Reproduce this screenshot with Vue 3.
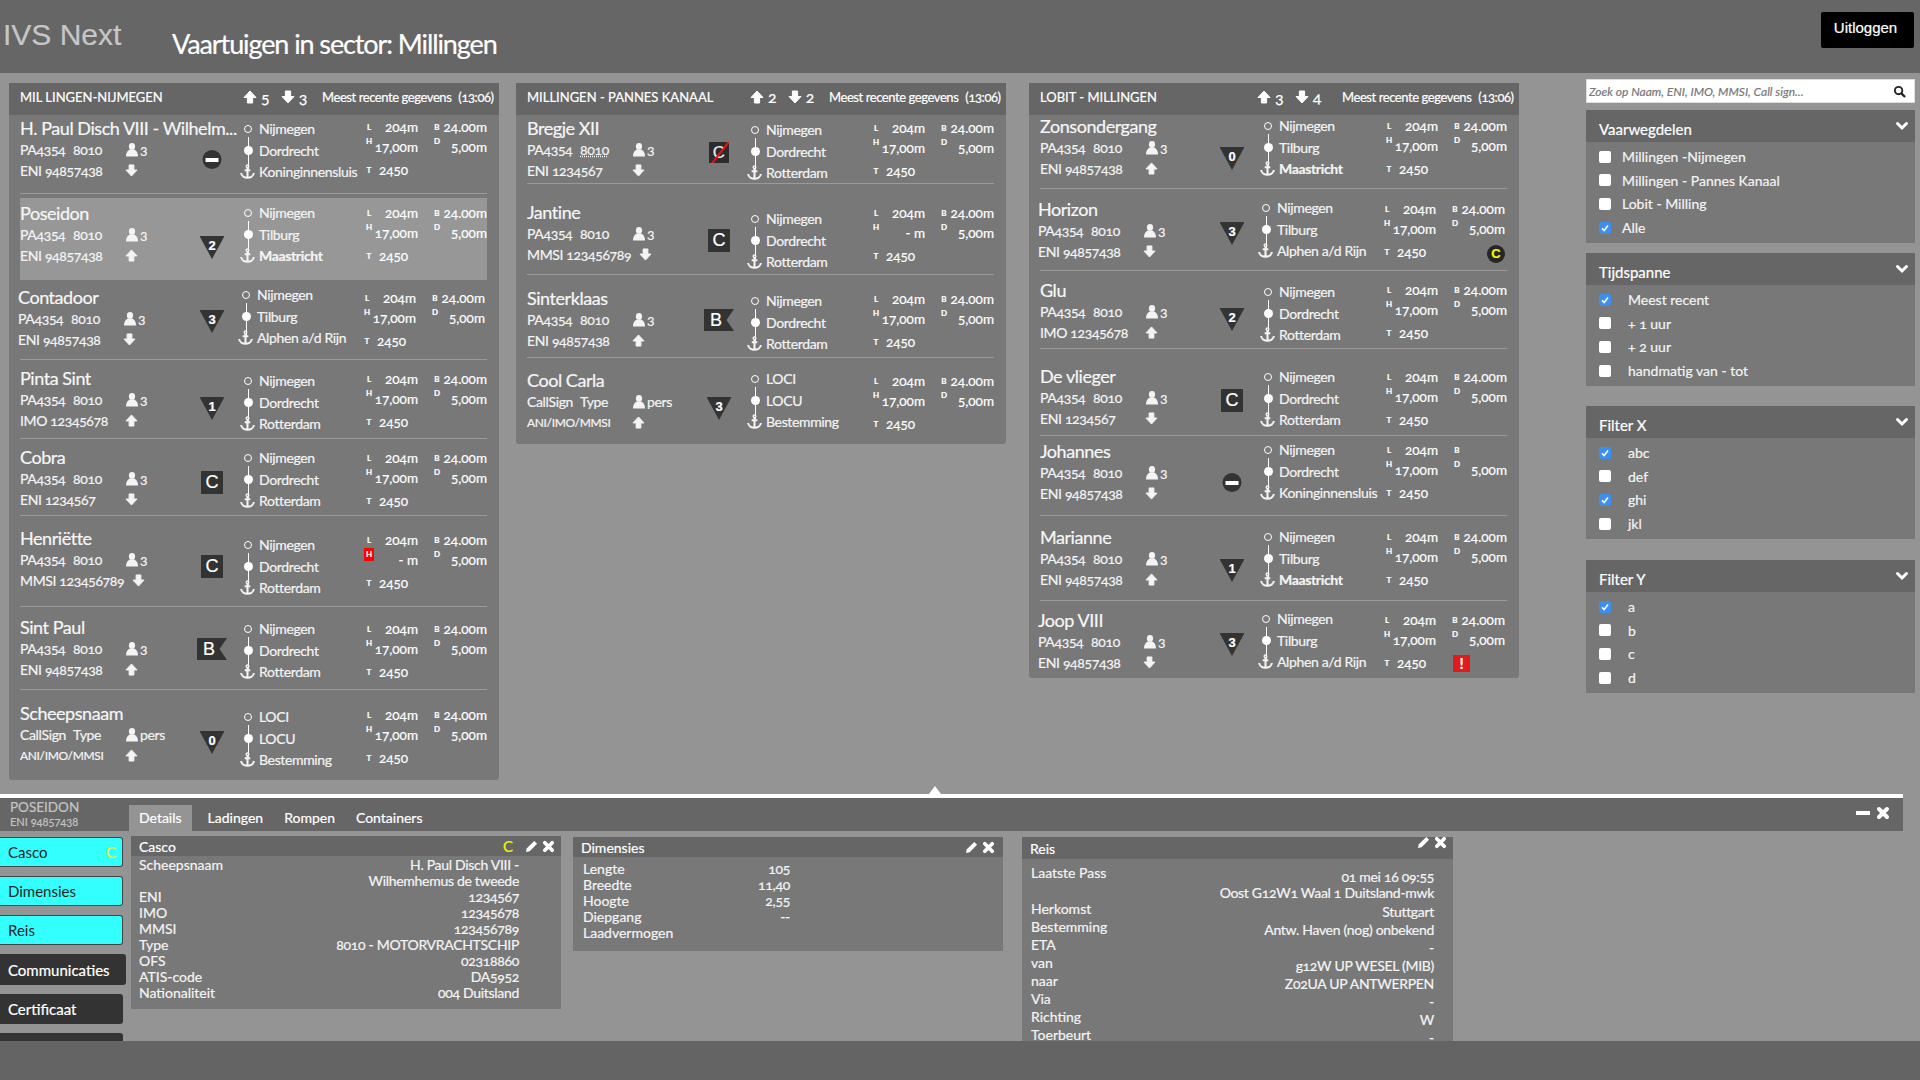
<template>
  <div class="page">
    <svg class="defs" width="0" height="0">
      <symbol id="i-up" viewBox="0 0 14 14"><path d="M7 1 13 7.5H9.6V13H4.4V7.5H1Z" fill="currentColor" stroke="currentColor" stroke-linejoin="round"/></symbol>
      <symbol id="i-down" viewBox="0 0 14 14"><path d="M7 13 13 6.5H9.6V1H4.4V6.5H1Z" fill="currentColor" stroke="currentColor" stroke-linejoin="round"/></symbol>
      <symbol id="i-person" viewBox="0 0 14 14"><ellipse cx="7" cy="3.4" rx="3.1" ry="3.4" fill="currentColor"/><path d="M1 13.4C1 11 1.6 8.6 4.6 6.6H9.4C12.4 8.6 13 11 13 13.4Z" fill="currentColor"/></symbol>
      <symbol id="i-anchor" viewBox="0 0 16 16"><g fill="none" stroke="currentColor" stroke-width="2.2"><circle cx="8" cy="2.4" r="1.4" stroke-width="1.5"/><path d="M8 4V14.5M5 6.6H11M1.2 9.6C1.6 13 5 14.6 8 14.6S14.4 13 14.8 9.6"/></g></symbol>
      <symbol id="i-pencil" viewBox="0 0 14 14"><path d="M10 1 13 4 5 12 1 13 2 9Z" fill="currentColor"/></symbol>
      <symbol id="i-close" viewBox="0 0 14 14"><path d="M3 3 11 11M11 3 3 11" stroke="currentColor" stroke-width="4" stroke-linecap="round" fill="none"/></symbol>
      <symbol id="i-chevron" viewBox="0 0 14 10"><path d="M2.5 2.5 7 7 11.5 2.5" stroke="currentColor" stroke-width="3" stroke-linecap="round" fill="none"/></symbol>
    </svg>

    <header class="top">
      <div class="brand">IVS Next</div>
      <h1 class="title">Vaartuigen in sector: Millingen</h1>
      <button class="logout">Uitloggen</button>
    </header>

    <main class="board">
      <section v-for="panel in panels" :key="panel.title" class="panel">
        <div class="panel-head">
          <span class="panel-title">{{ panel.title }}</span>
          <span class="counts" :style="{ marginRight: panel.shift + 'px' }">
            <svg class="ic-head"><use href="#i-up" /></svg><b>{{ panel.up }}</b>
            <svg class="ic-head down"><use href="#i-down" /></svg><b>{{ panel.down }}</b>
          </span>
          <span class="meta">Meest recente gegevens <i>(13:06)</i></span>
        </div>
        <div class="panel-body">
          <article
            v-for="ship in panel.ships"
            :key="ship.name"
            class="row"
            :class="{ active: ship.active, last: ship.last }"
            :style="{ height: ship.h + 'px', marginTop: (ship.mt || 0) + 'px' }"
          >
            <div class="ship" :style="{ paddingTop: ship.n - 12 + 'px', marginLeft: (ship.nx || 0) + 'px' }">
              <div class="name">{{ ship.name }}</div>
              <div class="info">
                <span class="pa">{{ ship.pa }}</span>
                <span class="type" :class="{ dotted: ship.dotted }">{{ ship.type }}</span>
                <svg class="ic-person"><use href="#i-person" /></svg>
                <span>{{ ship.count }}</span>
              </div>
              <div class="info">
                <span class="ident" :class="{ small: ship.small }">{{ ship.id }}</span>
                <svg class="ic-dir"><use :href="ship.dir === 'up' ? '#i-up' : '#i-down'" /></svg>
              </div>
            </div>

            <div v-if="ship.flag" class="flag" :class="flagClass(ship.flag)" :style="{ top: ship.fy + 'px' }">
              <span>{{ flagText(ship.flag) }}</span>
              <i v-if="ship.flag === 'Cx'" class="slash"></i>
            </div>

            <div class="route" :style="{ paddingTop: ship.r - 11 + 'px' }">
              <div class="stop"><span class="stop-ic"><i class="ring"></i></span>{{ ship.route[0] }}</div>
              <div class="stop"><span class="stop-ic"><i class="dot"></i></span>{{ ship.route[1] }}</div>
              <div class="stop" :class="{ strong: ship.route[2] === 'Maastricht' }">
                <span class="stop-ic"><svg class="ic-anchor"><use href="#i-anchor" /></svg></span>{{ ship.route[2] }}
              </div>
            </div>

            <div class="dims" :style="{ paddingTop: ship.d - 9 + 'px' }">
              <span class="tag">L</span><span class="val">204m</span>
              <span class="tag">B</span><span class="val">{{ ship.noB ? '' : '24.00m' }}</span>
              <span class="tag up" :class="{ warn: ship.warnH }">H</span><span class="val">{{ ship.noH ? '- m' : '17,00m' }}</span>
              <span class="tag up">D</span><span class="val">5,00m</span>
              <span class="tag">T</span><span class="val left">2450</span>
              <span v-if="ship.alert" class="alert">!</span>
              <span v-else-if="ship.yellow" class="yellow">C</span>
            </div>
          </article>
        </div>
      </section>

      <aside class="side">
        <div class="search">
          <input type="text" placeholder="Zoek op Naam, ENI, IMO, MMSI, Call sign..." />
          <svg viewBox="0 0 14 14" class="ic-search"><circle cx="6" cy="6" r="4" fill="none" stroke="#222" stroke-width="2" /><path d="M9 9 13 13" stroke="#222" stroke-width="2.4" /></svg>
        </div>
        <div v-for="group in filters" :key="group.title" class="filter" :style="{ marginBottom: group.gap + 'px' }">
          <div class="filter-head">
            <span>{{ group.title }}</span>
            <svg class="ic-chevron"><use href="#i-chevron" /></svg>
          </div>
          <div class="filter-body">
            <label v-for="item in group.items" :key="item.label" class="check">
              <span class="box" :class="{ on: item.on }">
                <svg v-if="item.on" viewBox="0 0 12 12"><path d="M3 6.4 5.2 8.6 9 3.6" fill="none" stroke="#fff" stroke-width="1.6" /></svg>
              </span>
              <span class="check-text" :style="{ marginLeft: group.indent + 'px' }">{{ item.label }}</span>
            </label>
          </div>
        </div>
      </aside>
    </main>

    <section class="detail">
      <i class="notch"></i>
      <div class="detail-head">
        <div class="who">
          <div class="who-name">POSEIDON</div>
          <div class="who-id">ENI 94857438</div>
        </div>
        <nav class="tabs">
          <a v-for="(tab, i) in tabs" :key="tab" class="tab" :class="{ current: i === 0 }">{{ tab }}</a>
        </nav>
        <div class="win-actions">
          <i class="min"></i>
          <svg class="ic-win"><use href="#i-close" /></svg>
        </div>
      </div>

      <div class="detail-main">
        <nav class="side-nav">
          <a v-for="item in sections" :key="item.label" class="nav-btn" :class="[item.kind]">
            {{ item.label }}<em v-if="item.mark">C</em>
          </a>
        </nav>

        <div class="card casco">
          <div class="card-head">
            <span>Casco</span>
            <span class="card-tools"><b class="mark">C</b><svg><use href="#i-pencil" /></svg><svg><use href="#i-close" /></svg></span>
          </div>
          <dl class="facts">
            <template v-for="f in casco" :key="f[0]">
              <dt>{{ f[0] }}</dt>
              <dd>{{ f[1] }}<template v-if="f[2]"><br />{{ f[2] }}</template></dd>
            </template>
          </dl>
        </div>

        <div class="card dimensions">
          <div class="card-head">
            <span>Dimensies</span>
            <span class="card-tools"><svg><use href="#i-pencil" /></svg><svg><use href="#i-close" /></svg></span>
          </div>
          <dl class="facts">
            <template v-for="f in dimensions" :key="f[0]">
              <dt>{{ f[0] }}</dt>
              <dd>{{ f[1] }}</dd>
            </template>
          </dl>
        </div>

        <div class="card trip">
          <div class="card-head">
            <span>Reis</span>
            <span class="card-tools high"><svg><use href="#i-pencil" /></svg><svg><use href="#i-close" /></svg></span>
          </div>
          <dl class="facts">
            <template v-for="f in trip" :key="f[0]">
              <dt>{{ f[0] }}</dt>
              <dd>{{ f[1] }}<template v-if="f[2]"><br />{{ f[2] }}</template></dd>
            </template>
          </dl>
        </div>
      </div>
    </section>

    <footer class="bottom"></footer>
  </div>
</template>

<script setup>
const NMG = 'Nijmegen'
const DOR = 'Dordrecht'
const TIL = 'Tilburg'
const ROT = 'Rotterdam'

// h = rijhoogte, n/r/d = middenlijn van naam, route en maten, fy = top van de vlag
const ship = (name, id, dir, flag, route, pos, extra = {}) => ({
  name, id, dir, flag, route,
  pa: 'PA4354', type: '8010', count: '3',
  h: pos[0], n: pos[1], r: pos[2], d: pos[3], fy: pos[4],
  ...extra,
})

const callsign = { pa: 'CallSign', type: 'Type', count: 'pers', small: true }

const panels = [
  {
    title: 'MIL LINGEN-NIJMEGEN', up: 5, down: 3, shift: 0,
    ships: [
      ship('H. Paul Disch VIII - Wilhelm...', 'ENI 94857438', 'down', 'min', [NMG, DOR, 'Koninginnensluis'], [79, 14, 14, 12, 35]),
      ship('Poseidon', 'ENI 94857438', 'up', '2', [NMG, TIL, 'Maastricht'], [82, 16, 15, 15, 38], { active: true, mt: 4 }),
      ship('Contadoor', 'ENI 94857438', 'down', '3', [NMG, TIL, 'Alphen a/d Rijn'], [80, 18, 15, 18, 30], { nx: -2 }),
      ship('Pinta Sint', 'IMO 12345678', 'up', '1', [NMG, DOR, ROT], [79, 19, 21, 19, 37]),
      ship('Cobra', 'ENI 1234567', 'down', 'C', [NMG, DOR, ROT], [77, 19, 19, 19, 32]),
      ship('Henriëtte', 'MMSI 123456789', 'down', 'C', [NMG, DOR, ROT], [91, 23, 29, 24, 39], { noH: true, warnH: true }),
      ship('Sint Paul', 'ENI 94857438', 'up', 'B', [NMG, DOR, ROT], [83, 21, 22, 22, 31]),
      ship('Scheepsnaam', 'ANI/IMO/MMSI', 'up', '0', ['LOCI', 'LOCU', 'Bestemming'], [90, 24, 27, 25, 41], { ...callsign, last: true }),
    ],
  },
  {
    title: 'MILLINGEN - PANNES KANAAL', up: 2, down: 2, shift: 0,
    ships: [
      ship('Bregje XII', 'ENI 1234567', 'down', 'Cx', [NMG, DOR, ROT], [69, 14, 15, 13, 27], { dotted: true }),
      ship('Jantine', 'MMSI 123456789', 'down', 'C', [NMG, DOR, ROT], [91, 29, 35, 29, 45], { noH: true }),
      ship('Sinterklaas', 'ENI 94857438', 'up', 'B', [NMG, DOR, ROT], [83, 24, 26, 24, 34]),
      ship('Cool Carla', 'ANI/IMO/MMSI', 'up', '3', ['LOCI', 'LOCU', 'Bestemming'], [86, 23, 21, 23, 39], { ...callsign, last: true }),
    ],
  },
  {
    title: 'LOBIT - MILLINGEN', up: 3, down: 4, shift: 6,
    ships: [
      ship('Zonsondergang', 'ENI 94857438', 'up', '0', [NMG, TIL, 'Maastricht'], [74, 11, 10, 11, 32]),
      ship('Horizon', 'ENI 94857438', 'down', '3', [NMG, TIL, 'Alphen a/d Rijn'], [82, 21, 19, 20, 33], { yellow: true, nx: -2 }),
      ship('Glu', 'IMO 12345678', 'up', '2', [NMG, DOR, ROT], [78, 20, 21, 19, 37]),
      ship('De vlieger', 'ENI 1234567', 'down', 'C', [NMG, DOR, ROT], [87, 28, 28, 28, 40]),
      ship('Johannes', 'ENI 94857438', 'down', 'min', [NMG, DOR, 'Koninginnensluis'], [80, 16, 14, 14, 37], { noB: true }),
      ship('Marianne', 'ENI 94857438', 'up', '1', [NMG, TIL, 'Maastricht'], [85, 22, 21, 21, 43]),
      ship('Joop VIII', 'ENI 94857438', 'down', '3', [NMG, TIL, 'Alphen a/d Rijn'], [77, 20, 18, 19, 32], { alert: true, last: true, nx: -2 }),
    ],
  },
]

const flagClass = (f) => {
  if (f === 'min') return 'f-min'
  if (f === 'C' || f === 'Cx') return f === 'C' ? 'f-c' : 'f-c crossed'
  if (f === 'B') return 'f-b'
  return 'f-tri'
}
const flagText = (f) => (f === 'min' ? '' : f === 'Cx' ? 'C' : f)

const boxes = (labels, on = []) => labels.map((label) => ({ label, on: on.includes(label) }))
const filters = [
  { title: 'Vaarwegdelen', indent: 11, gap: 10, items: boxes(['Millingen -Nijmegen', 'Millingen - Pannes Kanaal', 'Lobit - Milling', 'Alle'], ['Alle']) },
  { title: 'Tijdspanne', indent: 17, gap: 20, items: boxes(['Meest recent', '+ 1 uur', '+ 2 uur', 'handmatig van - tot'], ['Meest recent']) },
  { title: 'Filter X', indent: 17, gap: 21, items: boxes(['abc', 'def', 'ghi', 'jkl'], ['abc', 'ghi']) },
  { title: 'Filter Y', indent: 17, gap: 0, items: boxes(['a', 'b', 'c', 'd'], ['a']) },
]

const tabs = ['Details', 'Ladingen', 'Rompen', 'Containers']
const sections = [
  { label: 'Casco', kind: 'cyan', mark: true },
  { label: 'Dimensies', kind: 'cyan' },
  { label: 'Reis', kind: 'cyan' },
  { label: 'Communicaties', kind: 'dark wide' },
  { label: 'Certificaat', kind: 'dark' },
  { label: '', kind: 'dark' },
]

const casco = [
  ['Scheepsnaam', 'H. Paul Disch VIII -', 'Wilhemhemus de tweede'],
  ['ENI', '1234567'],
  ['IMO', '12345678'],
  ['MMSI', '123456789'],
  ['Type', '8010 - MOTORVRACHTSCHIP'],
  ['OFS', '02318860'],
  ['ATIS-code', 'DA5952'],
  ['Nationaliteit', '004 Duitsland'],
]
const dimensions = [
  ['Lengte', '105'],
  ['Breedte', '11,40'],
  ['Hoogte', '2,55'],
  ['Diepgang', '--'],
  ['Laadvermogen', ''],
]
const trip = [
  ['Laatste Pass', '01 mei 16 09:55', 'Oost G12W1 Waal 1 Duitsland-mwk'],
  ['Herkomst', 'Stuttgart'],
  ['Bestemming', 'Antw. Haven (nog) onbekend'],
  ['ETA', '-'],
  ['van', 'g12W UP WESEL (MIB)'],
  ['naar', 'Z02UA UP ANTWERPEN'],
  ['Via', '-'],
  ['Richting', 'W'],
  ['Toerbeurt', '-'],
]
</script>

<style>
html, body { margin: 0; background: #949494; }
</style>

<style scoped>
.page {
  width: 1920px;
  height: 1080px;
  overflow: hidden;
  display: flex;
  flex-direction: column;
  background: #949494;
  color: #f4f4f4;
  font-family: Lato, "Noto Sans", sans-serif;
  font-size: 14px;
  font-variant-numeric: oldstyle-nums;
  -webkit-text-stroke: 0.2px currentColor;
}
.defs { position: absolute; }
svg { display: block; }

.top {
  flex: 0 0 73px;
  display: flex;
  align-items: flex-start;
  background: #666;
}
.brand {
  width: 172px;
  padding: 18px 0 0 3px;
  box-sizing: border-box;
  font-family: "Liberation Sans", sans-serif;
  font-size: 30px;
  color: #c6c6c6;
}
.title {
  margin: 27px 0 0;
  font-size: 27px;
  font-weight: 400;
  letter-spacing: -1.1px;
  color: #fff;
}
.logout {
  margin: 12px 6px 0 auto;
  width: 93px;
  height: 36px;
  border: 0;
  border-radius: 2px;
  background: #000;
  color: #fff;
  font-family: "Liberation Sans", sans-serif;
  font-size: 15px;
  padding: 0 4px 6px 0;
}

.board {
  flex: 0 0 721px;
  display: flex;
  align-items: flex-start;
  padding: 10px 0 0 9px;
  box-sizing: border-box;
}
.panel {
  width: 490px;
  background: #787878;
  border-radius: 0 0 3px 3px;
}
.panel:nth-child(2) { margin-left: 17px; }
.panel:nth-child(3) { margin-left: 23px; }
.panel-head {
  height: 32px;
  display: flex;
  align-items: center;
  padding: 0 5px 5px 11px;
  box-sizing: border-box;
  background: #666;
  font-size: 13px;
  color: #fff;
}
.panel-title { flex: 1; white-space: nowrap; }
.counts {
  display: flex;
  align-items: center;
  width: 79px;
  font-size: 16px;
}
.counts b { font-weight: 400; margin-left: 4px; }
.ic-head { width: 14px; height: 14px; }
.ic-head.down { margin-left: 11px; }
.meta { white-space: nowrap; width: 172px; text-align: left; font-size: 13px; letter-spacing: -0.42px; }
.meta i { font-style: normal; margin-left: 4px; }
.panel-body { padding: 0 12px 0 11px; }

.row {
  position: relative;
  display: flex;
  box-sizing: border-box;
  border-bottom: 1px solid #9a9a9a;
}
.row.last { border-bottom: 0; }
.row.active { background: #979797; border-bottom: 0; }
.ship { width: 217px; flex: none; }
.name {
  font-size: 18px;
  line-height: 22px;
  white-space: nowrap;
  letter-spacing: -0.45px;
  color: #f6f6f6;
}
.info {
  display: flex;
  align-items: center;
  height: 21px;
  font-size: 14px;
  letter-spacing: -0.35px;
}
.pa { width: 53px; flex: none; }
.type { width: 52px; flex: none; }
.type.dotted { text-decoration: underline dotted; }
.ident { min-width: 105px; padding-right: 8px; box-sizing: border-box; white-space: nowrap; }
.ident.small { font-size: 12px; }
.ic-person { width: 14px; height: 14px; margin-right: 1px; }
.ic-dir { width: 13px; height: 13px; }

.flag {
  position: absolute;
  left: 192px;
  transform: translateX(-50%);
  display: flex;
  align-items: center;
  justify-content: center;
  background: #333;
  color: #fff;
  font-family: "Liberation Sans", sans-serif;
}
.f-tri {
  width: 25px;
  height: 23px;
  clip-path: polygon(0 0, 100% 0, 50% 100%);
  align-items: flex-start;
  font-size: 13px;
  font-weight: 700;
  padding-top: 2px;
  box-sizing: border-box;
}
.f-min { width: 19px; height: 19px; border-radius: 50%; }
.f-min::after { content: ""; width: 13px; height: 4px; background: #fff; }
.f-c { width: 22px; height: 23px; font-size: 18px; }
.f-c.crossed { width: 20px; height: 21px; font-size: 17px; color: #eee; background: #2c2c2c; overflow: hidden; }
.slash {
  position: absolute;
  left: -3px;
  top: 10px;
  width: 28px;
  height: 1.5px;
  background: #e11;
  transform: rotate(-52deg);
}
.f-b {
  width: 30px;
  height: 22px;
  justify-content: flex-start;
  padding-left: 6px;
  box-sizing: border-box;
  font-size: 18px;
  clip-path: polygon(0 0, 100% 0, 75% 50%, 100% 100%, 0 100%);
}

.route {
  position: relative;
  width: 127px;
  flex: none;
}
.stop {
  display: flex;
  align-items: center;
  height: 21.5px;
  white-space: nowrap;
  font-size: 14px;
  letter-spacing: -0.35px;
}
.stop.strong { font-weight: 700; }
.stop-ic {
  width: 22px;
  flex: none;
  display: flex;
  justify-content: center;
  position: relative;
}
.ring { width: 6px; height: 6px; border: 1.6px solid #fff; border-radius: 50%; }
.dot { width: 9px; height: 9px; background: #fff; border-radius: 50%; }
.stop:first-child .stop-ic::after {
  content: "";
  position: absolute;
  left: 10.5px;
  top: 12px;
  width: 1px;
  height: 32px;
  background: #fff;
}
.ic-anchor { width: 15px; height: 15px; margin-left: -2px; }

.dims {
  display: grid;
  grid-template-columns: 10px 44px 14px 10px 45px;
  grid-template-rows: 18px 22px 24px;
  width: 123px;
  flex: none;
  align-items: center;
  align-content: start;
  font-size: 13.5px;
  color: #fff;
}
.dims > .tag { grid-column: 1; justify-self: center; }
.dims > .tag:nth-of-type(3), .dims > .tag:nth-of-type(7) { grid-column: 4; }
.tag {
  font-size: 8px;
  font-weight: 700;
  line-height: 12px;
  width: 10px;
  text-align: center;
}
.tag.up { align-self: start; margin-top: -1px; }
.tag.warn { background: #f00; height: 13px; margin-top: -1px; }
.val { text-align: right; white-space: nowrap; }
.dims > .val:nth-of-type(4), .dims > .val:nth-of-type(8) { grid-column: 5; }
.val.left { text-align: left; padding-left: 5px; }
.alert {
  grid-column: 4 / 5;
  width: 17px;
  height: 17px;
  background: #e01b1b;
  color: #fff;
  text-align: center;
  font-weight: 700;
  font-size: 15px;
  line-height: 17px;
  margin-left: 3px;
}
.yellow {
  grid-column: 5;
  justify-self: end;
  width: 18px;
  height: 18px;
  border-radius: 50%;
  background: #262626;
  color: #f7f700;
  font-family: "Liberation Sans", sans-serif;
  font-weight: 700;
  font-size: 13px;
  line-height: 18px;
  text-align: center;
  margin-top: 4px;
}

.side {
  width: 329px;
  margin-left: 67px;
  margin-top: -4px;
  flex: none;
}
.search {
  position: relative;
  height: 24px;
  margin-bottom: 7px;
}
.search input {
  width: 100%;
  height: 100%;
  box-sizing: border-box;
  border: 1px solid #ddd;
  background: #fff;
  padding: 0 30px 0 2px;
  font: italic 12px Lato, sans-serif;
  outline: none;
}
.search input::placeholder { color: #777; opacity: 1; }
.ic-search { position: absolute; right: 9px; top: 6px; width: 13px; height: 13px; }
.filter-head {
  height: 32px;
  display: flex;
  align-items: flex-end;
  justify-content: space-between;
  padding: 0 6px 4px 13px;
  box-sizing: border-box;
  background: #666;
  font-size: 15px;
  color: #fff;
}
.ic-chevron { width: 14px; height: 10px; align-self: flex-start; margin-top: 11px; }
.filter-body { background: #787878; padding: 3px 0 3px 13px; height: 101px; box-sizing: border-box; }
.check { display: flex; align-items: center; height: 23.6px; font-size: 14px; }
.box {
  width: 12px;
  height: 12px;
  flex: none;
  background: #fff;
  border-radius: 2px;
}
.box.on { background: #3a8ff0; }

.detail {
  position: relative;
  flex: 0 0 247px;
  width: 1903px;
  box-sizing: border-box;
  border-top: 4px solid #fff;
  overflow: visible;
}
.notch {
  position: absolute;
  left: 929px;
  top: -12px;
  border: 6px solid transparent;
  border-top: 0;
  border-bottom: 8px solid #fff;
}
.detail-head {
  height: 33px;
  display: flex;
  background: #666;
  box-sizing: border-box;
  padding-left: 10px;
}
.who { width: 119px; color: #c4c4c4; line-height: 1; padding-top: 3px; }
.who-name { font-size: 13.5px; }
.who-id { font-size: 11px; margin-top: 1px; }
.tabs { display: flex; align-items: flex-end; }
.tab {
  height: 26px;
  line-height: 26px;
  font-size: 14px;
  padding: 0 10px;
  margin-right: 1px;
  color: #fff;
}
.tab.current { background: #949494; margin-right: 6px; }
.win-actions { margin-left: auto; display: flex; align-items: center; gap: 6px; padding-right: 13px; padding-bottom: 3px; }
.min { width: 14px; height: 4px; background: #fff; }
.ic-win { width: 14px; height: 14px; color: #fff; }

.detail-main {
  display: flex;
  align-items: flex-start;
  height: 210px;
  overflow: hidden;
}
.side-nav {
  width: 131px;
  flex: none;
  padding-top: 6px;
}
.nav-btn {
  display: flex;
  justify-content: space-between;
  align-items: center;
  width: 123px;
  height: 30px;
  margin-bottom: 9px;
  padding: 0 8px;
  box-sizing: border-box;
  border-radius: 0 3px 3px 0;
  font-size: 15px;
}
.nav-btn.cyan { background: #33ffff; color: #222; border: 1px solid #444; border-left: 0; -webkit-text-stroke: 0; }
.nav-btn.dark { background: #333; color: #fff; }
.nav-btn.wide { width: 126px; height: 31px; }
.nav-btn em { font-style: normal; color: #f4f400; font-size: 15px; margin-right: -2px; }

.card { background: #787878; flex: none; }
.card-head {
  height: 20px;
  background: #666;
  display: flex;
  align-items: center;
  justify-content: space-between;
  padding: 0 6px 0 8px;
  font-size: 14px;
  color: #fff;
}
.card-tools { display: flex; align-items: center; gap: 4px; }
.card-tools svg { width: 13px; height: 13px; }
.card-tools.high { align-self: flex-start; margin-top: -1px; }
.mark { color: #f4f400; font-weight: 400; font-size: 15px; margin-right: 8px; }
.facts {
  margin: 0;
  display: grid;
  line-height: 16px;
  font-size: 14px;
}
.facts dd { margin: 0; text-align: right; letter-spacing: -0.3px; }
.facts dt { color: #f4f4f4; }

.casco { width: 430px; height: 173px; margin-top: 5px; }
.casco .facts { grid-template-columns: 1fr auto; padding: 1px 42px 0 8px; }
.dimensions { width: 430px; height: 114px; margin: 6px 0 0 12px; }
.dimensions .card-tools { margin-right: 2px; }
.dimensions .facts { grid-template-columns: 1fr auto; width: 207px; padding: 4px 0 0 10px; }
.trip { width: 431px; height: 260px; margin: 6px 0 0 19px; }
.trip .card-head { height: 22px; }
.trip .facts { grid-template-columns: 1fr auto; padding: 7px 19px 0 9px; line-height: 18px; }
.trip .facts dt { margin-top: -2px; }
.trip .facts dd { margin: 1px 0 -1px; }
.trip .facts dd:first-of-type { line-height: 16px; padding-top: 2px; margin-bottom: 1px; }

.bottom { flex: 0 0 39px; background: #646464; }
</style>
